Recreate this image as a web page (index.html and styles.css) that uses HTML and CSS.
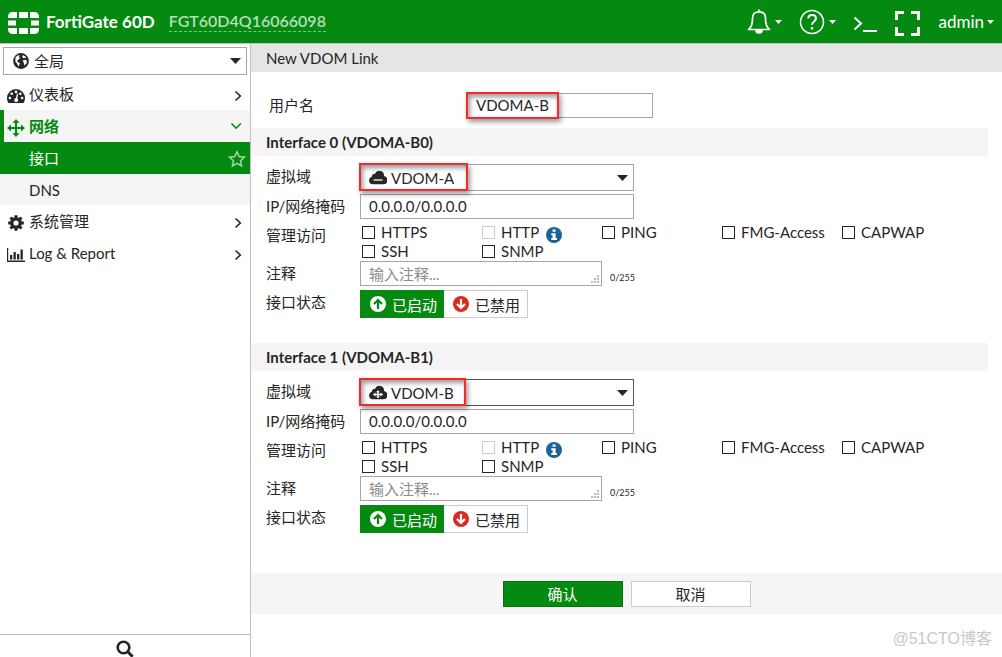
FILE: index.html
```html
<!DOCTYPE html>
<html lang="zh-CN">
<head>
<meta charset="utf-8">
<title>New VDOM Link</title>
<link rel="stylesheet" href="styles.css">
</head>
<body>
<svg class="defs" aria-hidden="true">
  <symbol id="caret" viewBox="0 0 7 4"><path d="M0 0h7L3.500 4z"/></symbol>
  <symbol id="chevron" viewBox="0 0 8 12"><path d="M1.500 1.500 6.300 6l-4.800 4.500" fill="none" stroke="currentColor" stroke-width="1.700"/></symbol>
  <symbol id="info" viewBox="0 0 16 16"><circle cx="8" cy="8" r="8" fill="#1f6299"/><path d="M6.600 2.500h3v2.300h-3zM5.300 6.300h4.300v4.700h1.300v2H5.300v-2h1.300V8.200H5.300z" fill="#fff"/></symbol>
  <symbol id="up" viewBox="0 0 16 16"><circle cx="8" cy="8" r="8" fill="#fff"/><path d="M8 13V4.500M4 8l4-4 4 4" fill="none" stroke="#048a10" stroke-width="2.200"/></symbol>
  <symbol id="down" viewBox="0 0 16 16"><circle cx="8" cy="8" r="8" fill="#dc2a20"/><path d="M8 3v8.500M4 8l4 4 4-4" fill="none" stroke="#fff" stroke-width="2.200"/></symbol>
  <symbol id="cloud" viewBox="0 0 18 14"><path d="M4 14a4 4 0 0 1-1.200-7.800A3.200 3.200 0 0 1 6 3.200 4.700 4.700 0 0 1 15 5.500a4.300 4.300 0 0 1-1 8.500z" fill="#262626"/></symbol>
</svg>
<header class="topbar">
  <svg class="brand-icon" viewBox="0 0 31 22" fill="#fff"><path d="M11 0h9v6h-9zM11 16h9v6h-9zM0 8.500h8v5H0zM23 8.500h8v5h-8zM5 0h4v6H0V5Q0 0 5 0zM22 0h4q5 0 5 5v1h-9zM0 16h9v6H5q-5 0-5-5zM22 16h9v1q0 5-5 5h-4z"/></svg>
  <strong class="model">FortiGate 60D</strong>
  <a class="serial" href="#">FGT60D4Q16066098</a>
  <nav class="tools">
    <button class="tool bell" aria-label="Notifications">
      <svg width="24" height="26" viewBox="0 0 24 26" fill="none" stroke="#fff" stroke-width="1.700"><path d="M1.500 20.500c3-3 4-5 4-11C5.500 5 8 2.800 12 2.800s6.500 2.200 6.500 6.700c0 6 1 8 4 11z" stroke-linejoin="round"/><path d="M12 .500v2.500"/><path d="M9 21h6c0 4-6 4-6 0z" fill="#fff"/></svg>
      <svg class="caret" width="7" height="4"><use href="#caret"/></svg>
    </button>
    <button class="tool help" aria-label="Help">
      <svg width="26" height="26" viewBox="0 0 26 26" fill="none" stroke="#fff"><circle cx="13" cy="13" r="11.500" stroke-width="1.500"/><path d="M9.300 9.500C9.300 7.300 11 6 13 6c2.200 0 3.900 1.300 3.900 3.400 0 3-3.800 3.200-3.800 6.300" stroke-width="2"/><path d="M13 18v2.500" stroke-width="2.400"/></svg>
      <svg class="caret" width="7" height="4"><use href="#caret"/></svg>
    </button>
    <button class="tool cli" aria-label="CLI console"><svg width="24" height="18" viewBox="0 0 24 18" fill="none" stroke="#fff" stroke-width="2"><path d="M1.500 2.500 8 8.500l-6.500 6M10 16h14"/></svg></button>
    <button class="tool full" aria-label="Full screen"><svg width="25" height="25" viewBox="0 0 25 25" fill="none" stroke="#fff" stroke-width="3"><path d="M1.500 9V1.500H9M16 1.500h7.500V9M23.500 16v7.500H16M9 23.500H1.500V16"/></svg></button>
    <button class="tool admin">admin<svg class="caret" width="7" height="4"><use href="#caret"/></svg></button>
  </nav>
</header>
<div class="layout">
  <aside class="sidebar">
    <div class="select-wrap scope">
      <svg class="lead" viewBox="0 0 16 16"><circle cx="8" cy="8" r="7.900" fill="#262626"/><path d="M2.500 4.300 5 2.200l1.800.200-1 1.700 1.300 1-1.800 1.700-1.500 1.100 1.500 1.300L7 10.400l-.800 1.600-.900 1.500-1.100-2.700-1.900-2.300zM9.600 2.200l2.300.900 1.500 2.100-1.700-.400-1.300.500-1.200-1.300zM9.800 7.400l2.300-.600 2 1.200-.700 2.600-1.900 2-.800-2.700z" fill="#fff"/></svg>
      <select aria-label="VDOM"><option>全局</option></select>
      <svg class="drop" viewBox="0 0 11 6"><path d="M0 0h11L5.500 6z"/></svg>
    </div>
    <nav class="menu">
      <a class="item" href="#"><svg class="micon" viewBox="0 0 18 16"><path d="M0 10a9 9 0 0 1 18 0c0 2-.600 3.800-1.500 5h-15C.600 13.800 0 12 0 10z" fill="#262626"/><g fill="#fff"><circle cx="2.900" cy="10" r="1.300"/><circle cx="4.700" cy="5.700" r="1.300"/><circle cx="9" cy="3.900" r="1.300"/><circle cx="13.300" cy="5.700" r="1.300"/><circle cx="15.100" cy="10" r="1.300"/><path d="m10 5.500 1.200.300-.900 4.600a2 2 0 1 1-1.400-.300z"/></g></svg><span>仪表板</span><svg class="chev"><use href="#chevron"/></svg></a>
      <a class="item open" href="#"><svg class="micon" viewBox="0 0 18 18" fill="#048a10"><path d="m9 0 3.500 4H10v4h4V5.500L18 9l-4 3.500V10h-4v4h2.500L9 18l-3.500-4H8v-4H4v2.500L0 9l4-3.500V8h4V4H5.500z"/></svg><span>网络</span><svg class="chev chev-open" viewBox="0 0 12 8"><path d="m1.500 1.500 4.700 4.700 4.700-4.700" fill="none" stroke="currentColor" stroke-width="1.600"/></svg></a>
      <a class="item active" href="#"><span>接口</span><svg class="star" viewBox="0 0 18 18"><path d="m9 1.800 2.200 4.800 5.300.600-3.900 3.600 1 5.200L9 13.400 4.400 16l1-5.200-3.900-3.600 5.300-.600z" fill="none" stroke="#a3d6a7" stroke-width="1.500"/></svg></a>
      <a class="item sub" href="#"><span>DNS</span></a>
      <a class="item" href="#"><svg class="micon" viewBox="0 0 18 18" fill="none" stroke="#262626"><circle cx="9" cy="9" r="4.300" stroke-width="3.400"/><path d="M9 1.200v3M9 13.800v3M1.200 9h3M13.800 9h3M3.500 3.500l2 2M12.500 12.500l2 2M3.500 14.500l2-2M12.500 5.500l2-2" stroke-width="3"/></svg><span>系统管理</span><svg class="chev"><use href="#chevron"/></svg></a>
      <a class="item" href="#"><svg class="micon" viewBox="0 0 18 16" fill="#262626"><path d="M0 1h1.200v12.500H18V15H0zM3 8h2.300v4.500H3zM6.500 5h2.300v7.500H6.500zM10 7h2.300v5.500H10zM13.500 2.500h2.300v10h-2.300z"/></svg><span>Log &amp; Report</span><svg class="chev"><use href="#chevron"/></svg></a>
    </nav>
    <button class="search" aria-label="Search"><svg width="18" height="18" viewBox="0 0 18 18" fill="none" stroke="#262626"><circle cx="7.500" cy="7.500" r="5.800" stroke-width="2.600"/><path d="m12 12 4.700 4.700" stroke-width="3"/></svg></button>
  </aside>
  <main class="content">
    <h1>New VDOM Link</h1>
    <form>
      <div class="name-row">
        <label for="name">用户名</label>
        <div class="field"><input id="name" type="text" value="VDOMA-B"><i class="mark mark-name"></i></div>
      </div>
      <section>
        <h2>Interface 0 (VDOMA-B0)</h2>
        <div class="rows">
          <label for="vd0">虚拟域</label>
          <div class="select-wrap vdom">
            <svg class="lead" viewBox="0 0 18 14"><use href="#cloud"/><path d="M4.500 9.500h9" stroke="#fff" stroke-width="1.300"/></svg>
            <select id="vd0"><option>VDOM-A</option></select>
            <svg class="drop" viewBox="0 0 11 6"><path d="M0 0h11L5.500 6z"/></svg><i class="mark mark-a"></i>
          </div>
          <label for="ip0">IP/网络掩码</label>
          <input id="ip0" type="text" value="0.0.0.0/0.0.0.0">
          <span class="label">管理访问</span>
          <div class="checks">
            <label><input type="checkbox">HTTPS</label>
            <label><input type="checkbox" disabled>HTTP<svg class="info"><use href="#info"/></svg></label>
            <label><input type="checkbox">PING</label>
            <label><input type="checkbox">FMG-Access</label>
            <label><input type="checkbox">CAPWAP</label>
            <label><input type="checkbox">SSH</label>
            <label><input type="checkbox">SNMP</label>
          </div>
          <label for="c0">注释</label>
          <div class="comment"><div class="area"><textarea id="c0" rows="1" placeholder="输入注释..."></textarea><svg class="grip" viewBox="0 0 8 8"><path d="M6 0h2v2H6zM3 3h2v2H3zM6 3h2v2H6zM0 6h2v2H0zM3 6h2v2H3zM6 6h2v2H6z"/></svg></div><small>0/255</small></div>
          <span class="label">接口状态</span>
          <div class="toggle"><button type="button" class="on"><svg><use href="#up"/></svg>已启动</button><button type="button" class="off"><svg><use href="#down"/></svg>已禁用</button></div>
        </div>
      </section>
      <section>
        <h2>Interface 1 (VDOMA-B1)</h2>
        <div class="rows">
          <label for="vd1">虚拟域</label>
          <div class="select-wrap vdom focused">
            <svg class="lead" viewBox="0 0 18 14"><use href="#cloud"/><path d="m3.800 9 2.700-2v1.300h1.800V6.800H7.100L9 4.700l1.900 2.100H9.700v1.500h1.800V7l2.700 2-2.700 2V9.700H9.700v1.200h1.200L9 12.800l-1.900-1.900h1.200V9.700H6.500V11z" fill="#fff"/></svg>
            <select id="vd1"><option>VDOM-B</option></select>
            <svg class="drop" viewBox="0 0 11 6"><path d="M0 0h11L5.500 6z"/></svg><i class="mark mark-b"></i>
          </div>
          <label for="ip1">IP/网络掩码</label>
          <input id="ip1" type="text" value="0.0.0.0/0.0.0.0">
          <span class="label">管理访问</span>
          <div class="checks">
            <label><input type="checkbox">HTTPS</label>
            <label><input type="checkbox" disabled>HTTP<svg class="info"><use href="#info"/></svg></label>
            <label><input type="checkbox">PING</label>
            <label><input type="checkbox">FMG-Access</label>
            <label><input type="checkbox">CAPWAP</label>
            <label><input type="checkbox">SSH</label>
            <label><input type="checkbox">SNMP</label>
          </div>
          <label for="c1">注释</label>
          <div class="comment"><div class="area"><textarea id="c1" rows="1" placeholder="输入注释..."></textarea><svg class="grip" viewBox="0 0 8 8"><path d="M6 0h2v2H6zM3 3h2v2H3zM6 3h2v2H6zM0 6h2v2H0zM3 6h2v2H3zM6 6h2v2H6z"/></svg></div><small>0/255</small></div>
          <span class="label">接口状态</span>
          <div class="toggle"><button type="button" class="on"><svg><use href="#up"/></svg>已启动</button><button type="button" class="off"><svg><use href="#down"/></svg>已禁用</button></div>
        </div>
      </section>
      <footer class="actions"><button type="button" class="ok">确认</button><button type="button" class="cancel">取消</button></footer>
    </form>
    <div class="watermark">@51CTO博客</div>
  </main>
</div>
</body>
</html>
```
FILE: styles.css
```css
* { box-sizing: border-box; }
body {
  margin: 0;
  height: 100vh;
  display: flex;
  flex-direction: column;
  overflow: hidden;
  background: #fff;
  color: #262626;
  font: 15px/24px Lato, "Noto Sans CJK SC", sans-serif;
}
button, input, select, textarea { font: inherit; color: inherit; margin: 0; border-radius: 0; }
button { cursor: pointer; }
svg { display: block; flex: none; }
.defs { position: absolute; width: 0; height: 0; }

.topbar {
  flex: none;
  display: flex;
  align-items: center;
  height: 44px;
  padding: 0 8px;
  background: #048a10;
  border-bottom: 1px solid #c0c0c0;
  color: #fff;
}
.brand-icon { width: 31px; height: 22px; margin-top: 3px; }
.model { margin-left: 7px; font-size: 17px; }
.serial {
  margin-left: 14px;
  color: #b5dfb8;
  font-size: 16px;
  font-weight: 600;
  line-height: 20px;
  text-decoration: none;
  border-bottom: 1px dashed #7fbf85;
}
.tools { margin-left: auto; display: flex; align-items: center; }
.tool {
  display: flex;
  align-items: center;
  gap: 4px;
  padding: 0;
  border: 0;
  background: none;
  color: #fff;
}
.caret { fill: #fff; }
.help { margin-left: 17px; }
.cli { margin: 5px 0 0 17px; }
.full { margin: 3px 0 0 18px; }
.tool.admin { margin-left: 18px; gap: 3px; font-size: 17px; }

.layout { flex: 1; display: flex; min-height: 0; }
.sidebar {
  flex: none;
  width: 251px;
  display: flex;
  flex-direction: column;
  border-right: 1px solid #c0c0c0;
}
.select-wrap { position: relative; }
.select-wrap select {
  display: block;
  width: 100%;
  height: 27px;
  padding: 0 0 0 30px;
  border: 1px solid #a6a6a6;
  background: #fff;
  appearance: none;
}
.drop { position: absolute; right: 6px; top: 11px; width: 11px; height: 6px; fill: #262626; }
.lead { position: absolute; left: 9px; top: 6px; width: 18px; height: 15px; }
.scope { margin: 3px; }
.scope select { height: 28px; }
.scope .lead { left: 10px; top: 6px; width: 16px; height: 16px; }

.menu { flex: 1; }
.item {
  display: flex;
  align-items: center;
  height: 32px;
  padding: 0 8px 0 7px;
  color: inherit;
  text-decoration: none;
}
.micon { width: 18px; height: 18px; margin: 4px 4px 0 0; }
.item span { flex: 1; }
.chev { width: 8px; height: 12px; margin-top: 4px; }
.open { padding-left: 3px; border-left: 4px solid #048a10; background: #f5f5f5; color: #048a10; font-weight: bold; }
.chev-open { width: 12px; height: 8px; margin-top: 0; }
.active { padding: 0 4px 0 29px; background: #048a10; color: #fff; }
.star { width: 18px; height: 18px; margin-top: 2px; }
.sub { height: 31px; padding-left: 29px; background: #f5f5f5; }
.search {
  display: flex;
  justify-content: center;
  height: 23px;
  padding: 5px 0 0;
  border: 0;
  border-top: 1px solid #c0c0c0;
  background: none;
}

.content { flex: 1; min-width: 0; display: flex; flex-direction: column; }
h1 { margin: 0; padding: 2px 15px; background: #e5e5e5; font-size: 15px; font-weight: normal; }
.name-row { display: flex; padding: 21px 18px 10px; }
.name-row label { width: 198px; }
.field { position: relative; width: 186px; }
input[type="text"], textarea {
  display: block;
  width: 100%;
  height: 25px;
  padding: 0 8px;
  border: 1px solid #a6a6a6;
  background: #fff;
}
input[type="text"] { padding-bottom: 2px; }
h2 { margin: 0 14px 0 0; padding: 2px 15px; background: #f5f5f5; font-size: 15px; font-weight: bold; }
.rows {
  display: grid;
  grid-template-columns: 94px 1fr;
  align-items: start;
  row-gap: 4px;
  padding: 8px 14px 25px 15px;
}
.rows > label, .label { line-height: 24px; }
.rows > input[type="text"], .vdom { width: 274px; }
.vdom { margin-bottom: -1px; }
.focused select { border-color: #555; }
.checks {
  display: grid;
  grid-template-columns: repeat(5, 120px);
  padding-left: 2px;
  margin-bottom: -4px;
}
.checks label { display: flex; align-items: center; height: 19px; padding-bottom: 2px; }
.checks input {
  appearance: none;
  width: 13px;
  height: 13px;
  margin: 2px 6px 0 0;
  border: 1px solid #262626;
  background: #fff;
}
.checks input:disabled { border-color: #ccc; }
.info { width: 16px; height: 16px; margin: 6px 0 0 7px; }
.comment { display: flex; height: 25px; }
.area { position: relative; width: 242px; }
textarea { resize: none; overflow: hidden; }
textarea::placeholder { color: #8c8c8c; }
.grip { position: absolute; right: 3px; bottom: 3px; width: 8px; height: 8px; fill: #bbb; }
small { margin: 6px 0 0 8px; font-size: 9px; line-height: 22px; }
.toggle { display: flex; }
.toggle button {
  display: flex;
  align-items: center;
  gap: 6px;
  width: 84px;
  height: 28px;
  padding: 1px 0 0 9px;
  border: 1px solid #ccc;
  background: #fff;
}
.toggle .off { border-left: 0; }
.toggle .on { border-color: #048a10; background: #048a10; color: #fff; }
.toggle svg { width: 16px; height: 16px; margin-top: -2px; }
.actions { display: flex; justify-content: center; gap: 8px; margin-top: 15px; padding: 8px 0 7px; background: #f5f5f5; }
.actions button { width: 120px; height: 26px; padding: 0; border: 1px solid #ccc; background: #fff; }
.actions .ok { border-color: #04780e; background: #048a10; color: #fff; }

.mark {
  position: absolute;
  top: -1px;
  left: -1px;
  height: 28px;
  border: 2px solid #f52a2a;
  box-shadow: 2px 3px 5px rgba(0, 0, 0, .4), inset 2px 3px 5px rgba(0, 0, 0, .4);
  pointer-events: none;
}
.mark-name { width: 93px; height: 27px; }
.mark-a { width: 109px; }
.mark-b { width: 107px; }
.watermark {
  margin: auto 10px 6px auto;
  color: #c8c8c8;
  font: 16px/24px "Liberation Sans", "Noto Sans CJK SC", sans-serif;
}
```
